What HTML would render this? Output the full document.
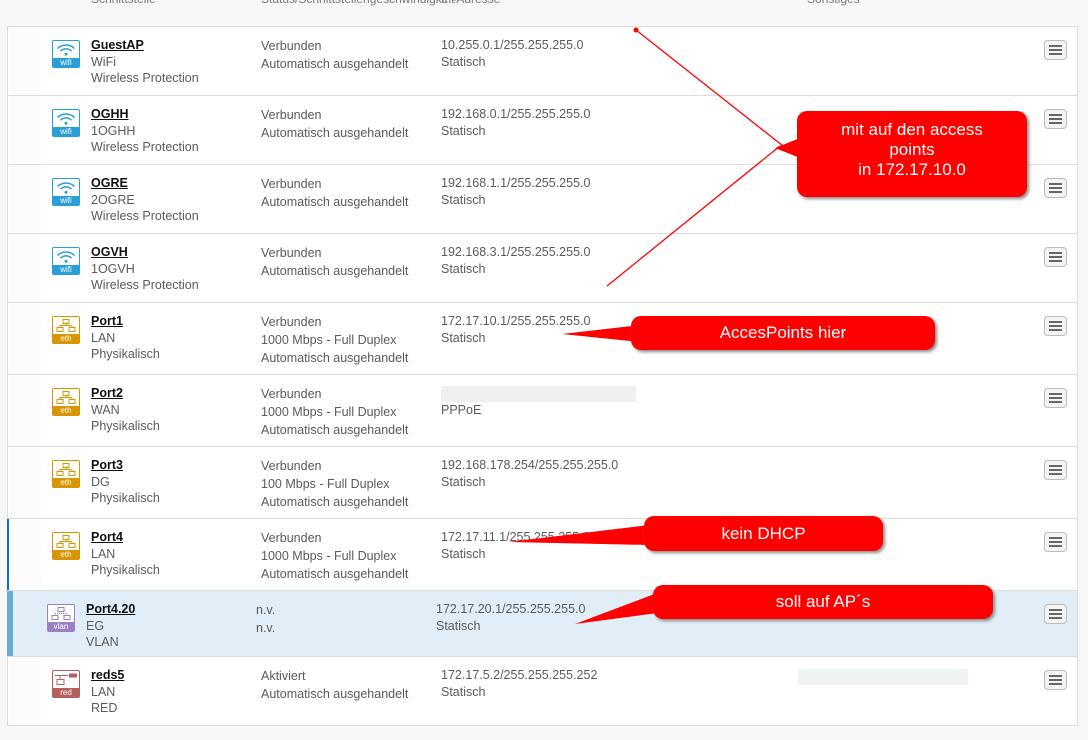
<!DOCTYPE html>
<html><head><meta charset="utf-8"><style>
body{margin:0;width:1088px;height:740px;background:#f7f7f7;font-family:"Liberation Sans",sans-serif;position:relative;overflow:hidden;color:#5a5a5a;font-size:12.5px}
.h{position:absolute;top:-8px;color:#777;font-size:12px}
.tbl{position:absolute;left:7px;top:26px;width:1069px;height:698px;border:1px solid #ddd;background:#fff}
.row{position:absolute;left:0;width:1069px;border-bottom:1px solid #ddd;box-sizing:border-box}
.c{position:absolute;line-height:17px;white-space:nowrap}
.n{color:#111;text-decoration:underline;font-weight:bold;font-size:12.5px}
.ic{position:absolute;width:28px;height:28px;border-radius:2px;box-sizing:border-box}
.ic .lb{position:absolute;bottom:0;left:0;right:0;height:9px;color:#fff;font-size:8px;line-height:9px;text-align:center}
.mb{position:absolute;right:10px;width:23px;height:20px;border:1px solid #bbb;border-radius:4px;background:#f4f4f4;box-sizing:border-box}
.mb i{position:absolute;left:4px;width:13px;height:2px;background:#666}
.co{position:absolute;background:#f00;color:#fff;border-radius:10px;box-shadow:2px 2px 3px #888;text-align:center;font-size:17px;font-family:"Liberation Sans",sans-serif}
</style></head><body>
<div class="h" style="left:91px">Schnittstelle</div>
<div class="h" style="left:261px">Status/Schnittstellengeschwindigkeit</div>
<div class="h" style="left:441px">IP-Adresse</div>
<div class="h" style="left:807px">Sonstiges</div>
<div class="tbl" id="t"></div>
<svg style="position:absolute;left:0;top:0" width="1088" height="740">
<g fill="#f00" stroke="#f00">
<circle cx="636" cy="30" r="2"/>
<line x1="636" y1="30" x2="783" y2="146" stroke-width="1.3"/>
<line x1="607" y1="286" x2="780" y2="146" stroke-width="1.3"/>
<polygon points="775,148 805,136 805,160" stroke="none"/>
<polygon points="562,334 640,325 640,342" stroke="none"/>
<polygon points="508,542 650,525 650,545" stroke="none"/>
<polygon points="575,624 665,590 665,612" stroke="none"/>
</g></svg>
<div class="co" style="left:797px;top:111px;width:230px;height:86px;line-height:20px;padding-top:9px;box-sizing:border-box">mit auf den access<br>points<br>in 172.17.10.0</div>
<div class="co" style="left:631px;top:316px;width:304px;height:34px;line-height:34px">AccesPoints hier</div>
<div class="co" style="left:644px;top:516px;width:239px;height:35px;line-height:35px">kein DHCP</div>
<div class="co" style="left:653px;top:585px;width:340px;height:34px;line-height:34px">soll auf AP´s</div>
<script>
var R=[
[0,69,'w','GuestAP','WiFi','Wireless Protection',['Verbunden','Automatisch ausgehandelt'],['10.255.0.1/255.255.255.0','Statisch']],
[69,69,'w','OGHH','1OGHH','Wireless Protection',['Verbunden','Automatisch ausgehandelt'],['192.168.0.1/255.255.255.0','Statisch']],
[138,69,'w','OGRE','2OGRE','Wireless Protection',['Verbunden','Automatisch ausgehandelt'],['192.168.1.1/255.255.255.0','Statisch']],
[207,69,'w','OGVH','1OGVH','Wireless Protection',['Verbunden','Automatisch ausgehandelt'],['192.168.3.1/255.255.255.0','Statisch']],
[276,72,'e','Port1','LAN','Physikalisch',['Verbunden','1000 Mbps - Full Duplex','Automatisch ausgehandelt'],['172.17.10.1/255.255.255.0','Statisch']],
[348,72,'e','Port2','WAN','Physikalisch',['Verbunden','1000 Mbps - Full Duplex','Automatisch ausgehandelt'],['','PPPoE']],
[420,72,'e','Port3','DG','Physikalisch',['Verbunden','100 Mbps - Full Duplex','Automatisch ausgehandelt'],['192.168.178.254/255.255.255.0','Statisch']],
[492,72,'e','Port4','LAN','Physikalisch',['Verbunden','1000 Mbps - Full Duplex','Automatisch ausgehandelt'],['172.17.11.1/255.255.255.0','Statisch']],
[564,66,'v','Port4.20','EG','VLAN',['n.v.','n.v.'],['172.17.20.1/255.255.255.0','Statisch']],
[630,68,'r','reds5','LAN','RED',['Aktiviert','Automatisch ausgehandelt'],['172.17.5.2/255.255.255.252','Statisch']]];
var h='';
R.forEach(function(r,i){
var v=r[2]=='v',o=v?-5:0;
var bg=v?'#e1eef7':'#fff';
h+='<div class="row" style="top:'+r[0]+'px;height:'+r[1]+'px;background:'+bg+(i==9?';border-bottom:none':'')+'">';
if(i==7)h+='<div style="position:absolute;left:-1px;top:0;width:6px;height:100%;background:#0a6fc2"></div>';
if(v)h+='<div style="position:absolute;left:-1px;top:0;width:6px;height:100%;background:#6aaad9"></div>';
else h+='<div style="position:absolute;left:1px;top:0;width:32px;height:100%;background:#fcfcfc"></div>';
var col={w:'#2a9fd6',e:'#d99500',v:'#9a7fc4',r:'#b5605e'}[r[2]];
var lb={w:'wifi',e:'eth',v:'vlan',r:'red'}[r[2]];
var g='';
if(r[2]=='w')g='<svg width="26" height="17" style="position:absolute;left:0;top:0"><g fill="none" stroke="'+col+'" stroke-width="1.5"><path d="M4.5 7.5a12 12 0 0 1 17 0"/><path d="M7.5 10.3a7.5 7.5 0 0 1 11 0"/></g><circle cx="13" cy="13.3" r="1.5" fill="'+col+'"/></svg>';
else if(r[2]=='r')g='<svg width="26" height="17" style="position:absolute;left:0;top:0"><g fill="none" stroke="'+col+'"><path d="M2 4.5h13M7 4.5v4"/><rect x="4" y="8.5" width="7" height="5"/></g><rect x="16" y="2.5" width="8" height="4" fill="'+col+'"/></svg>';
else g='<svg width="26" height="17" style="position:absolute;left:0;top:0"><g fill="none" stroke="'+col+'"><rect x="10" y="2.5" width="6" height="4"/><path d="M13 6.5v2M7 8.5h12M7 8.5v2M19 8.5v2"'+(v?' stroke-dasharray="1 1"':'')+'/><rect x="4" y="10.5" width="6" height="4"/><rect x="16" y="10.5" width="6" height="4"/></g></svg>';
h+='<div class="ic" style="left:'+(44+o)+'px;top:13px;border:1px solid '+col+';background:#fff">'+g+'<div class="lb" style="background:'+col+'">'+lb+'</div></div>';
h+='<div class="c" style="left:'+(83+o)+'px;top:10px"><span class="n">'+r[3]+'</span><br>'+r[4]+'<br><span style="position:relative;top:-1px">'+r[5]+'</span></div>';
h+='<div class="c" style="left:'+(253+o)+'px;top:10px;line-height:18px">'+r[6].join('<br>')+'</div>';
var ip=r[7][0]===''?'<span style="display:inline-block;width:195px;height:16px;background:#f0f0f0;vertical-align:middle"></span>':r[7][0];
h+='<div class="c" style="left:'+(433+o)+'px;top:10px">'+ip+'<br>'+r[7][1]+'</div>';
if(i==9)h+='<div style="position:absolute;left:790px;top:12px;width:170px;height:16px;background:#eef5ee"></div>';
h+='<div class="mb" style="top:13px"><i style="top:4px"></i><i style="top:8px"></i><i style="top:12px"></i></div>';
h+='</div>';});
document.getElementById('t').innerHTML=h;
</script>
</body></html>
